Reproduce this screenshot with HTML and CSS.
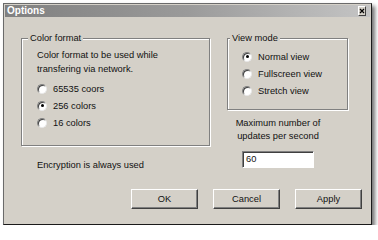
FILE: index.html
```html
<!DOCTYPE html>
<html>
<head>
<meta charset="utf-8">
<title>Options</title>
<link rel="stylesheet" href="styles.css">
</head>
<body>
<div class="dialog">
  <div class="titlebar">
    <span class="title">Options</span>
    <span class="close"><svg width="6" height="6" viewBox="0 0 6 6"><path d="M1 1 L5 5 M5 1 L1 5" stroke="#000" stroke-width="1.2" fill="none"/></svg></span>
  </div>
  <div class="content">
    <div class="columns">
      <div class="col-left">
        <fieldset class="group group-color">
          <legend>Color format</legend>
          <p class="desc">Color format to be used while<br>transfering via network.</p>
          <div class="radio-row"><span class="radio"></span><span>65535 coors</span></div>
          <div class="radio-row"><span class="radio checked"></span><span>256 colors</span></div>
          <div class="radio-row"><span class="radio"></span><span>16 colors</span></div>
        </fieldset>
        <p class="note">Encryption is always used</p>
      </div>
      <div class="col-right">
        <fieldset class="group group-view">
          <legend>View mode</legend>
          <div class="radio-row"><span class="radio checked"></span><span>Normal view</span></div>
          <div class="radio-row"><span class="radio"></span><span>Fullscreen view</span></div>
          <div class="radio-row"><span class="radio"></span><span>Stretch view</span></div>
        </fieldset>
        <div class="rate">
          <p class="rate-label">Maximum number of<br>updates per second</p>
          <div class="input">60</div>
        </div>
      </div>
    </div>
    <div class="buttons">
      <div class="btn">OK</div>
      <div class="btn">Cancel</div>
      <div class="btn">Apply</div>
    </div>
  </div>
</div>
</body>
</html>
```
FILE: styles.css
```css
html, body {
  margin: 0;
  padding: 0;
  background: #ffffff;
}
body {
  font-family: "Liberation Sans", Arial, sans-serif;
  font-size: 9.3px;
  color: #111;
}
p { margin: 0; }
.dialog {
  margin: 3px 0 0 3px;
  width: 365px;
  height: 218px;
  padding: 1px;
  border: 1px solid;
  border-color: #6a6a6a #1a1a1a #1a1a1a #6a6a6a;
  background: #d4d0c8;
  box-shadow: 3px 3px 4px rgba(0,0,0,0.55);
  display: flex;
  flex-direction: column;
}
.titlebar {
  height: 12px;
  background: linear-gradient(to right, #808080 0%, #9a9a9a 50%, #b4b4b4 80%, #c4c4c4 100%);
  display: flex;
  align-items: center;
  justify-content: space-between;
  padding: 0 4px 0 2px;
}
.title {
  color: #fff;
  font-weight: bold;
  font-size: 10px;
  line-height: 12px;
}
.close {
  width: 6px;
  height: 8px;
  background: #d4d0c8;
  border: 1px solid;
  border-color: #fff #404040 #404040 #fff;
  display: flex;
  align-items: center;
  justify-content: center;
}
.close svg { display: block; }
.content {
  flex: 1;
  padding: 16px 8px 0 16px;
  display: flex;
  flex-direction: column;
}
.columns {
  display: flex;
  gap: 17px;
  height: 137px;
}
.col-left { width: 189px; }
.col-right { width: 121px; }
.group {
  margin: 0;
  border: 1px solid #808080;
  box-shadow: inset 1px 1px 0 #fff, 1px 1px 0 #fff;
  box-sizing: border-box;
}
.group legend {
  padding: 0 2px;
  line-height: 10px;
  background: #d4d0c8;
}
.group-color {
  height: 113px;
  padding: 4px 4px 0 15px;
}
.group-color legend { margin-left: -9px; }
.group-view {
  height: 77px;
  padding: 5px 4px 0 14px;
}
.group-view legend { margin-left: -12px; }
.desc {
  line-height: 14px;
  margin-top: 1px;
  margin-bottom: 4px;
}
.radio-row {
  height: 17px;
  display: flex;
  align-items: center;
  gap: 6px;
}
.radio {
  width: 10px;
  height: 10px;
  box-sizing: border-box;
  border-radius: 50%;
  background: #fff;
  border: 1px solid;
  border-color: #808080 #e8e8e8 #e8e8e8 #808080;
  box-shadow: inset 1px 1px 0 #404040;
  display: flex;
  align-items: center;
  justify-content: center;
}
.radio.checked::after {
  content: "";
  width: 3px;
  height: 3px;
  border-radius: 50%;
  background: #000;
}
.note {
  margin: 14px 0 0 16px;
  line-height: 10px;
}
.rate {
  margin: 7px 0 0 8px;
  width: 86px;
  display: flex;
  flex-direction: column;
  align-items: center;
}
.rate-label {
  line-height: 13px;
  text-align: center;
  white-space: nowrap;
}
.input {
  margin-top: 8px;
  width: 72px;
  height: 17px;
  box-sizing: border-box;
  background: #fff;
  border: 1px solid;
  border-color: #808080 #fff #fff #808080;
  box-shadow: inset 1px 1px 0 #404040;
  padding-left: 3px;
  line-height: 15px;
}
.buttons {
  margin-top: 19px;
  display: flex;
  justify-content: flex-end;
  gap: 15px;
}
.btn {
  width: 67px;
  height: 20px;
  box-sizing: border-box;
  border: 1px solid;
  border-color: #fff #404040 #404040 #fff;
  box-shadow: inset -1px -1px 0 #808080;
  display: flex;
  align-items: center;
  justify-content: center;
}
```
